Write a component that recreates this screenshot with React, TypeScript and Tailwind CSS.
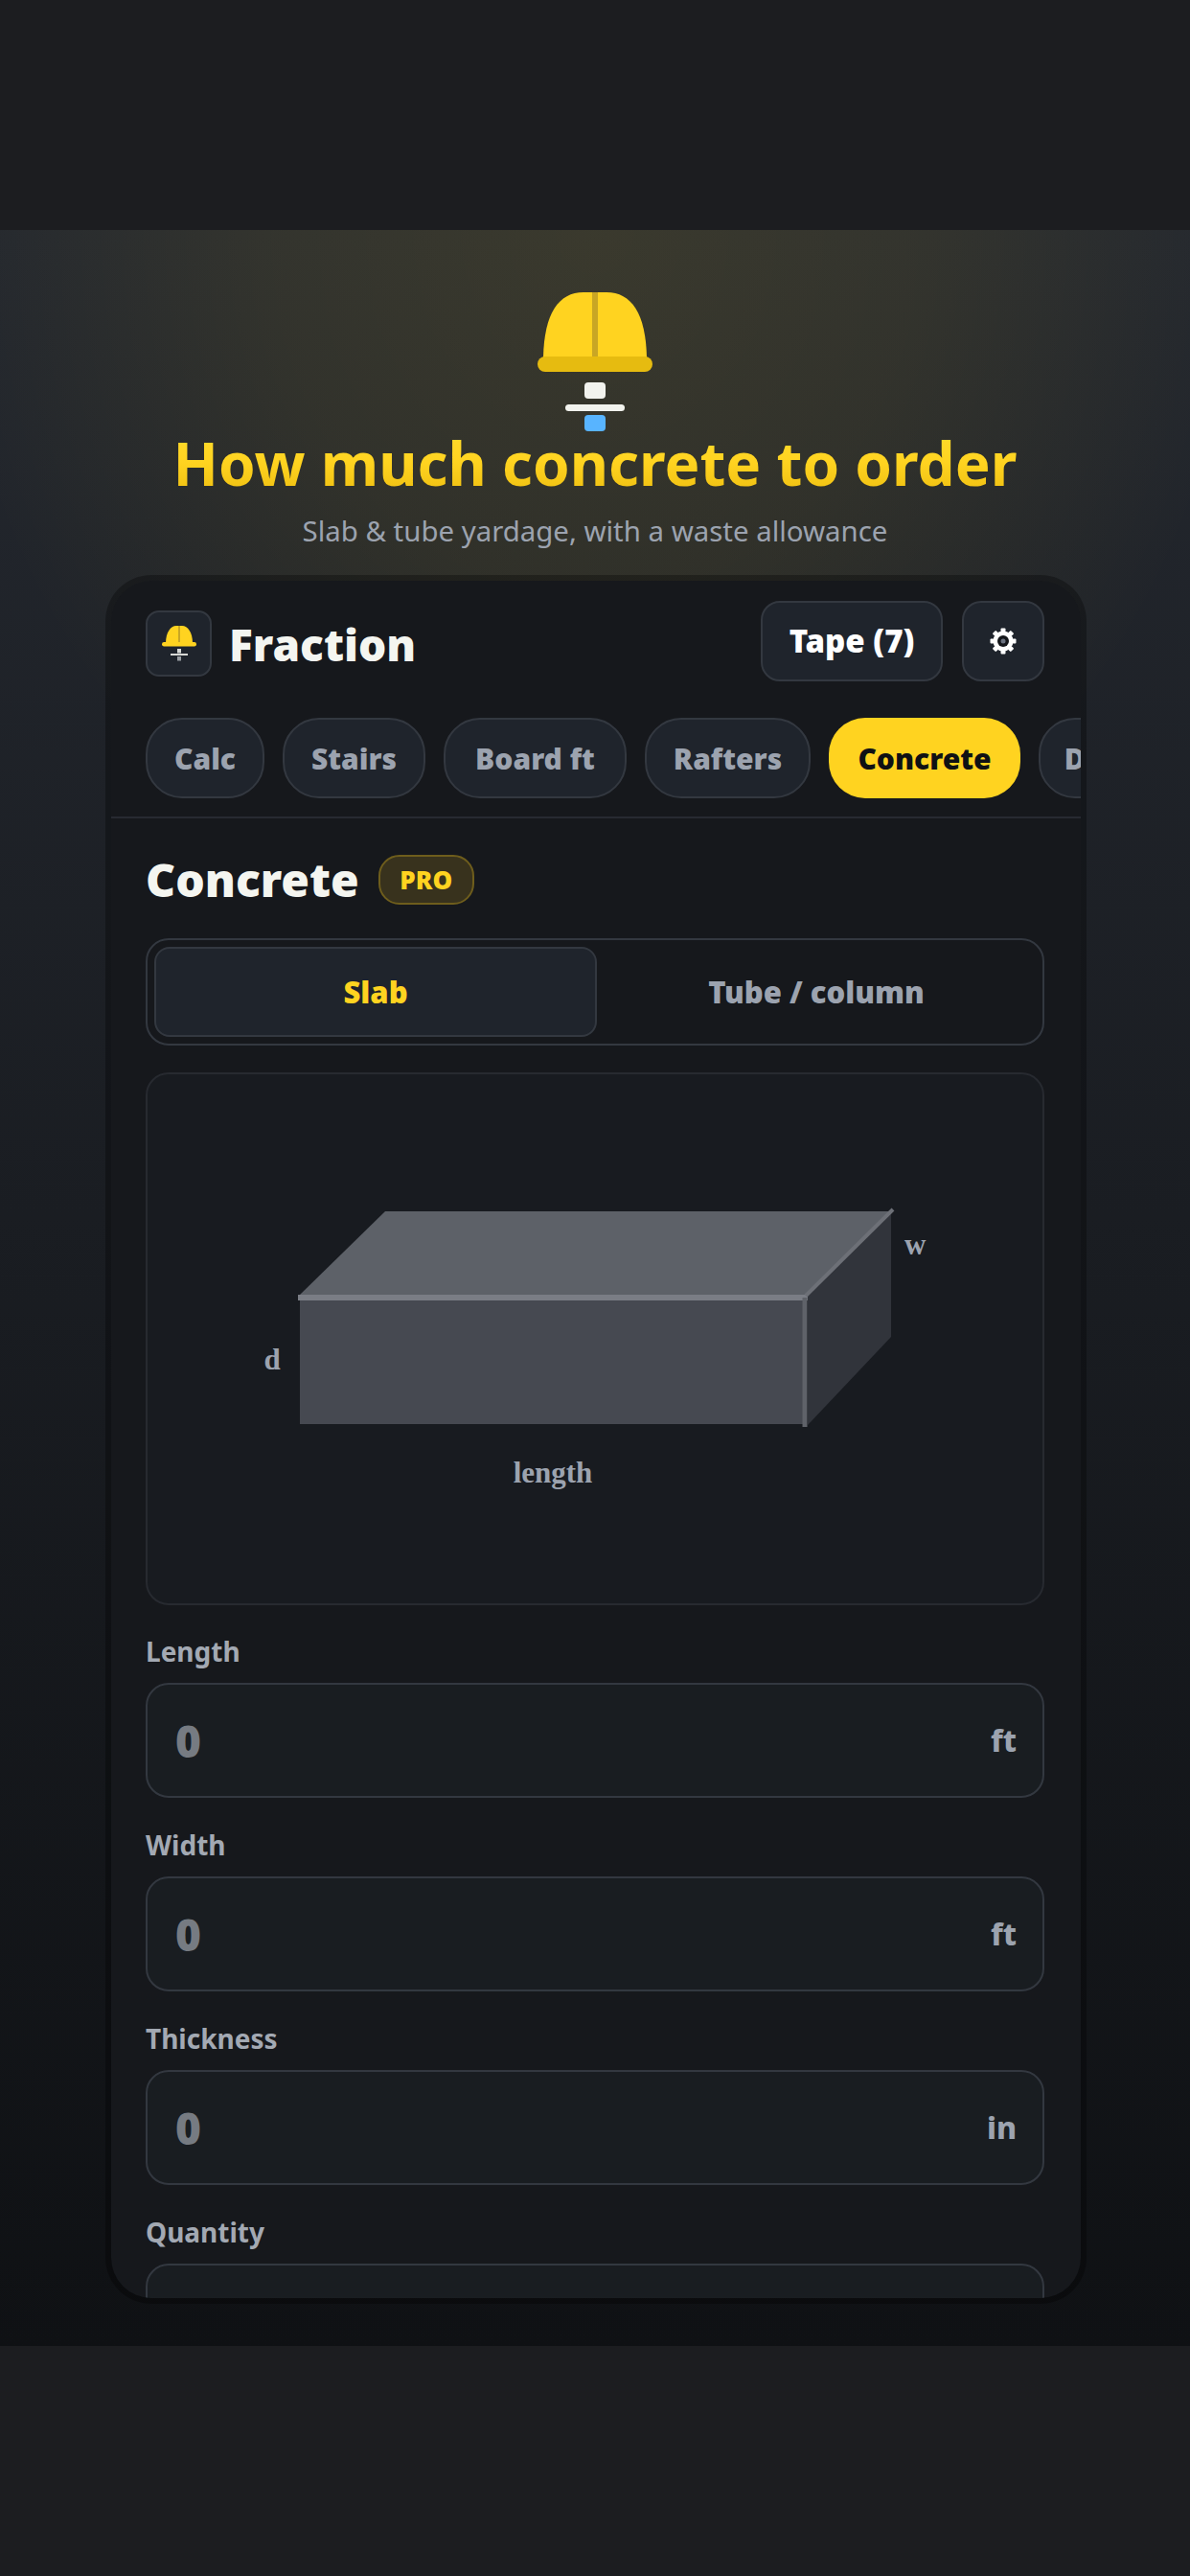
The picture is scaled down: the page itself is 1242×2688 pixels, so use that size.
const uiFont = "font-['Noto_Sans','Open_Sans',sans-serif]";

const tabs = [
  { name: 'Calc', width: 'w-[124px]' },
  { name: 'Stairs', width: 'w-[149px]' },
  { name: 'Board ft', width: 'w-[191px]' },
  { name: 'Rafters', width: 'w-[173px]' },
  { name: 'Concrete', width: 'w-[200px]' },
  { name: 'Deck', width: 'w-[130px]' },
];

const fields = [
  { label: 'Length', unit: 'ft' },
  { label: 'Width', unit: 'ft' },
  { label: 'Thickness', unit: 'in' },
  { label: 'Quantity', unit: '' },
];

function HeroLogo() {
  return (
    <svg width="120" height="146" viewBox="0 0 120 146" className="block">
      <path d="M6 68C7 22 22 0 48 0H72C98 0 113 22 114 68Z" fill="#ffd320" />
      <rect x="57" y="0" width="6" height="68" fill="#c9a624" />
      <rect x="0" y="67" width="120" height="16" rx="8" fill="#e6bb10" />
      <rect x="49" y="94" width="22" height="17" rx="4" fill="#f2f3ee" />
      <rect x="29" y="117" width="62" height="7" rx="3.5" fill="#f2f3ee" />
      <rect x="49" y="128" width="22" height="17" rx="4" fill="#58b4ff" />
    </svg>
  );
}

function SmallLogo() {
  return (
    <svg width="36" height="38" viewBox="0 0 36 38" className="block">
      <path d="M4 18C4 7 9 0 15 0H21C27 0 32 7 32 18Z" fill="#ffd320" />
      <rect x="17" y="0" width="2" height="18" fill="#c9a624" />
      <rect x="0" y="17" width="36" height="4.5" rx="2.2" fill="#ffd320" />
      <rect x="16" y="24" width="4" height="4.5" fill="#d8d9d6" />
      <rect x="9" y="29" width="18" height="2" fill="#d8d9d6" />
      <rect x="16" y="32" width="4" height="4.5" fill="#9a9ea3" />
    </svg>
  );
}

function GearIcon() {
  return (
    <svg width="28" height="28" viewBox="0 0 28 28" className="block">
      <g fill="#ffffff">
        {[0, 45, 90, 135, 180, 225, 270, 315].map((angle) => (
          <rect key={angle} x="11.5" y="0.5" width="5" height="4" rx="1" transform={`rotate(${angle} 14 14)`} />
        ))}
      </g>
      <circle cx="14" cy="14" r="10.5" fill="#ffffff" />
      <circle cx="14" cy="14" r="6" fill="#14161a" />
      <circle cx="14" cy="14" r="2.5" fill="#6b7280" />
    </svg>
  );
}

function SlabDiagram() {
  return (
    <svg width="934" height="552" viewBox="0 0 934 552" className="block">
      <polygon points="159,230 248,143 776,143 687,230" fill="#5d6168" />
      <polygon points="689,231 776,145 776,274 689,366" fill="#31343b" />
      <rect x="159" y="231" width="529" height="134" fill="#464951" />
      <line x1="157" y1="233" x2="689" y2="233" stroke="#7a7d85" strokeWidth="6" />
      <line x1="686" y1="233" x2="686" y2="368" stroke="#5f6269" strokeWidth="5" />
      <line x1="687" y1="231" x2="778" y2="141" stroke="#6d7077" strokeWidth="4" />
      <g fontFamily="'Liberation Serif', serif" fontWeight="700" fontSize="31" fill="#9ca3af">
        <text x="790" y="188">w</text>
        <text x="130" y="308" textAnchor="middle">d</text>
        <text x="423" y="426" textAnchor="middle">length</text>
      </g>
    </svg>
  );
}

export default function App() {
  return (
    <div className={`${uiFont} flex h-[2688px] w-[1242px] flex-col overflow-hidden bg-[#1c1d20]`}>
      <div className="h-[240px] shrink-0" />

      <main className="relative flex h-[2208px] shrink-0 flex-col items-center bg-gradient-to-b from-[#24282f] to-[#0f1114]">
        <div className="absolute inset-x-0 top-0 h-[760px] bg-[radial-gradient(ellipse_680px_760px_at_50%_0%,rgba(255,211,32,0.1),rgba(255,211,32,0.07)_50%,transparent_100%)]" />

        <div className="relative flex flex-col items-center pt-[65px]">
          <HeroLogo />
          <h1 className="mt-[-6px] bg-gradient-to-b from-[#ffdc2c] via-[#ffd320] to-[#ecbc0c] bg-clip-text text-[62px] leading-[76px] font-bold text-transparent">
            How much concrete to order
          </h1>
          <p className="mt-[14px] text-[29.4px] leading-[38px] text-[#9ca3af]">
            Slab &amp; tube yardage, with a waste allowance
          </p>
        </div>

        <section className="relative mt-[27px] ml-[2px] flex h-[1804px] w-[1024px] flex-col overflow-hidden rounded-[48px] border-[6px] border-black/30 bg-[#16181c] bg-clip-padding">
          <header className="flex h-[143px] shrink-0 items-start justify-between pt-[21px] pr-[38px] pl-[36px]">
            <div className="flex items-center gap-[18px] pt-[10px]">
              <div className="flex h-[69px] w-[69px] items-center justify-center rounded-[14px] border-2 border-[#333840] bg-[#1f242c]">
                <SmallLogo />
              </div>
              <span className="text-[46px] leading-none font-black text-[#f4f5f0]">Fraction</span>
            </div>
            <div className="flex gap-[20px]">
              <button className="h-[84px] w-[190px] rounded-[20px] border-2 border-[#333840] bg-[#1f242c] text-[33px] font-black text-white">
                Tape (7)
              </button>
              <button className="flex h-[84px] w-[86px] items-center justify-center rounded-[20px] border-2 border-[#333840] bg-[#1f242c]">
                <GearIcon />
              </button>
            </div>
          </header>

          <nav className="flex h-[105px] shrink-0 items-start gap-[19px] overflow-hidden border-b-2 border-[#272a31] pl-[36px]">
            {tabs.map((tab) => (
              <button
                key={tab.name}
                className={
                  tab.name === 'Concrete'
                    ? `${tab.width} h-[84px] shrink-0 rounded-[38px] bg-[#ffd320] text-[30px] font-black text-[#0f1114]`
                    : `${tab.width} h-[84px] shrink-0 rounded-[38px] border-2 border-[#333840] bg-[#1f242c] text-[30px] font-black text-[#9ca3af]`
                }
              >
                {tab.name}
              </button>
            ))}
          </nav>

          <div className="flex flex-col pt-[38px] pr-[38px] pl-[36px]">
            <div className="flex h-[52px] items-center gap-[20px]">
              <h2 className="text-[48px] leading-none font-black text-[#f4f5f0]">Concrete</h2>
              <span className="flex h-[52px] w-[100px] items-center justify-center rounded-[22px] border-2 border-[#6e5d1c] bg-[#38321d] text-[26px] font-black text-[#ffd320]">
                PRO
              </span>
            </div>

            <div className="mt-[35px] flex h-[112px] rounded-[24px] border-2 border-[#333840] p-[7px]">
              <button className="flex-1 rounded-[16px] border-2 border-[#333840] bg-[#1f242c] text-[31px] font-black text-[#ffd320]">
                Slab
              </button>
              <button className="flex-1 text-[31px] font-black text-[#9ca3af]">Tube / column</button>
            </div>

            <div className="mt-[28px] h-[556px] rounded-[24px] border-2 border-[#272a30] bg-[#181b20]">
              <SlabDiagram />
            </div>

            <div className="mt-[30px] flex flex-col gap-[31px]">
              {fields.map((field) => (
                <div key={field.label} className="flex flex-col">
                  <label className="mb-[15px] text-[28px] leading-[36px] font-bold text-[#a3a9b3]">{field.label}</label>
                  <div className="flex h-[120px] shrink-0 items-center justify-between rounded-[24px] border-2 border-[#333840] bg-[#191d21] pr-[27px] pl-[29px]">
                    <span className="text-[46px] font-black text-[#767b82]">{field.unit ? '0' : ''}</span>
                    <span className="text-[32px] font-extrabold text-[#9ca3af]">{field.unit}</span>
                  </div>
                </div>
              ))}
            </div>
          </div>
        </section>
      </main>

      <div className="h-[240px] shrink-0" />
    </div>
  );
}
